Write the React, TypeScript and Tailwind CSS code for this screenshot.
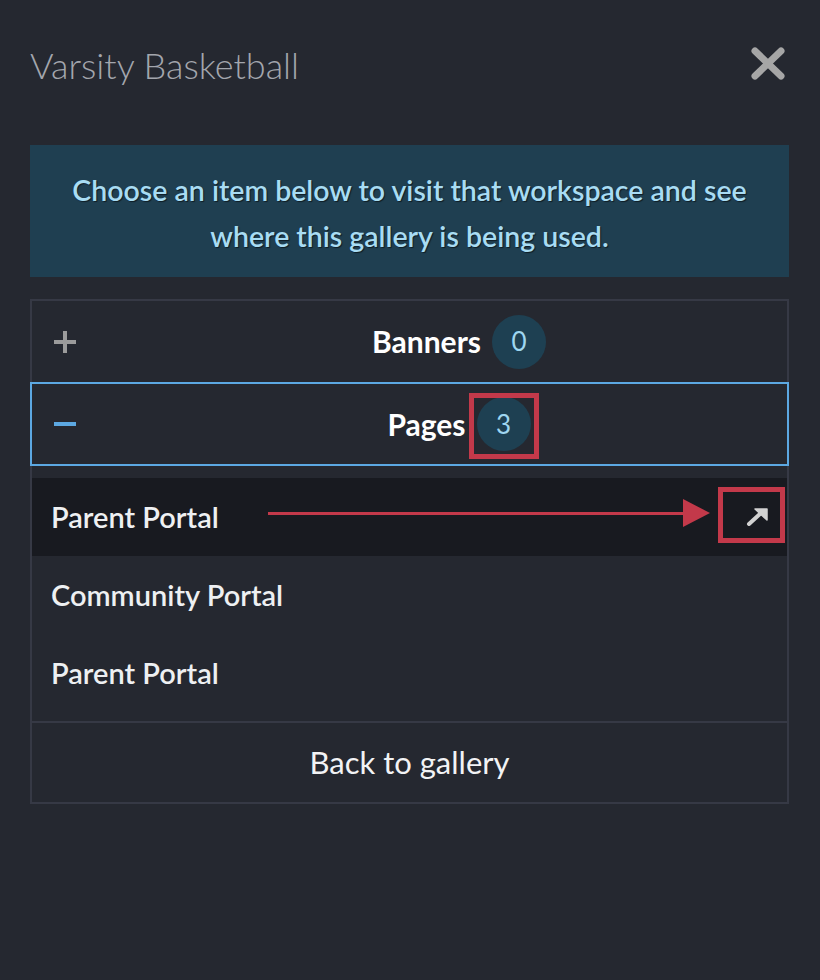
import React from "react";

function CloseIcon() {
  return (
    <svg width="34" height="33" viewBox="0 0 34 33" className="block">
      <path d="M4 4 L30 29 M30 4 L4 29" stroke="#a6a6a6" strokeWidth="7" strokeLinecap="round" fill="none" />
    </svg>
  );
}

function PlusIcon() {
  return (
    <svg width="22" height="22" viewBox="0 0 22 22" className="block">
      <rect x="9" y="0" width="4" height="22" fill="#9b9b9b" />
      <rect x="0" y="9" width="22" height="4" fill="#9b9b9b" />
    </svg>
  );
}

function MinusIcon() {
  return (
    <svg width="22" height="22" viewBox="0 0 22 22" className="block">
      <rect x="0" y="9" width="22" height="4" fill="#5ca8e2" />
    </svg>
  );
}

function ExternalArrow() {
  return (
    <svg width="22" height="18" viewBox="0 0 22 18" className="block">
      <path d="M3 16 L15 5" stroke="#d2d2d2" strokeWidth="4" strokeLinecap="round" fill="none" />
      <path d="M9 1 L21 1 L21 12 Z" fill="#d2d2d2" stroke="#d2d2d2" strokeWidth="1.5" strokeLinejoin="round" />
    </svg>
  );
}

export default function App() {
  return (
    <div className="min-h-[980px] w-[820px] bg-[#252830] pl-[30px] pr-[31px] font-['Lato',sans-serif]">
      <div className="flex h-[145px] items-start justify-between pt-[44px]">
        <div className="text-[36px] font-light leading-[42px] text-[#a3a6ad]">Varsity Basketball</div>
        <div className="mr-[4px] mt-[3px]">
          <CloseIcon />
        </div>
      </div>

      <div className="h-[132px] bg-[#1f3f51] pt-[22px] text-center text-[28.5px] font-semibold leading-[46px] text-[#a8dcf3] [text-shadow:1px_1px_1px_rgba(0,0,0,0.55)]">
        Choose an item below to visit that workspace and see
        <br />
        where this gallery is being used.
      </div>

      <div className="mt-[22px]">
        <div className="flex h-[83px] items-center border-2 border-b-0 border-[#363945]">
          <div className="w-[99px] pl-[22px]">
            <PlusIcon />
          </div>
          <div className="flex flex-1 items-center justify-center">
            <span className="text-[30px] font-bold text-white">Banners</span>
            <span className="ml-[11px] flex h-[54px] w-[54px] items-center justify-center rounded-full bg-[#1e4052] text-[26px] text-[#9fd6f0]">
              0
            </span>
          </div>
        </div>

        <div className="flex h-[84px] items-center border-2 border-[#5ca8e2]">
          <div className="w-[99px] pl-[22px]">
            <MinusIcon />
          </div>
          <div className="flex flex-1 items-center justify-center">
            <span className="text-[30px] font-bold text-white">Pages</span>
            <span className="relative ml-[11px] flex h-[54px] w-[54px] items-center justify-center rounded-full bg-[#1e4052] text-[26px] text-[#9fd6f0]">
              3
              <span className="absolute -bottom-[8px] -left-[8px] -right-[8px] -top-[4px] border-[5px] border-[#c3394a]" />
            </span>
          </div>
        </div>

        <div className="border-2 border-t-0 border-[#363945]">
          <div className="pb-[9px] pt-[12px]">
            <div className="relative flex h-[78px] items-center bg-[#181a20] pl-[19px]">
              <span className="text-[29px] font-semibold text-[#eef0f2]">Parent Portal</span>
              <span className="absolute left-[236px] top-[34px] h-[3px] w-[420px] bg-[#c3394a]" />
              <span className="absolute left-[651px] top-[21px] h-0 w-0 border-y-[14px] border-l-[27px] border-y-transparent border-l-[#c3394a]" />
              <span className="absolute left-[686px] top-[9px] h-[56px] w-[67px] border-[5px] border-[#c3394a]" />
              <span className="ml-auto mr-[19px]">
                <ExternalArrow />
              </span>
            </div>
            <div className="flex h-[78px] items-center pl-[19px]">
              <span className="text-[29px] font-semibold text-[#eef0f2]">Community Portal</span>
            </div>
            <div className="flex h-[78px] items-center pl-[19px]">
              <span className="text-[29px] font-semibold text-[#eef0f2]">Parent Portal</span>
            </div>
          </div>
          <div className="flex h-[81px] items-center justify-center border-t-2 border-[#363945] text-[31px] text-[#f2f3f5]">
            Back to gallery
          </div>
        </div>
      </div>
    </div>
  );
}
